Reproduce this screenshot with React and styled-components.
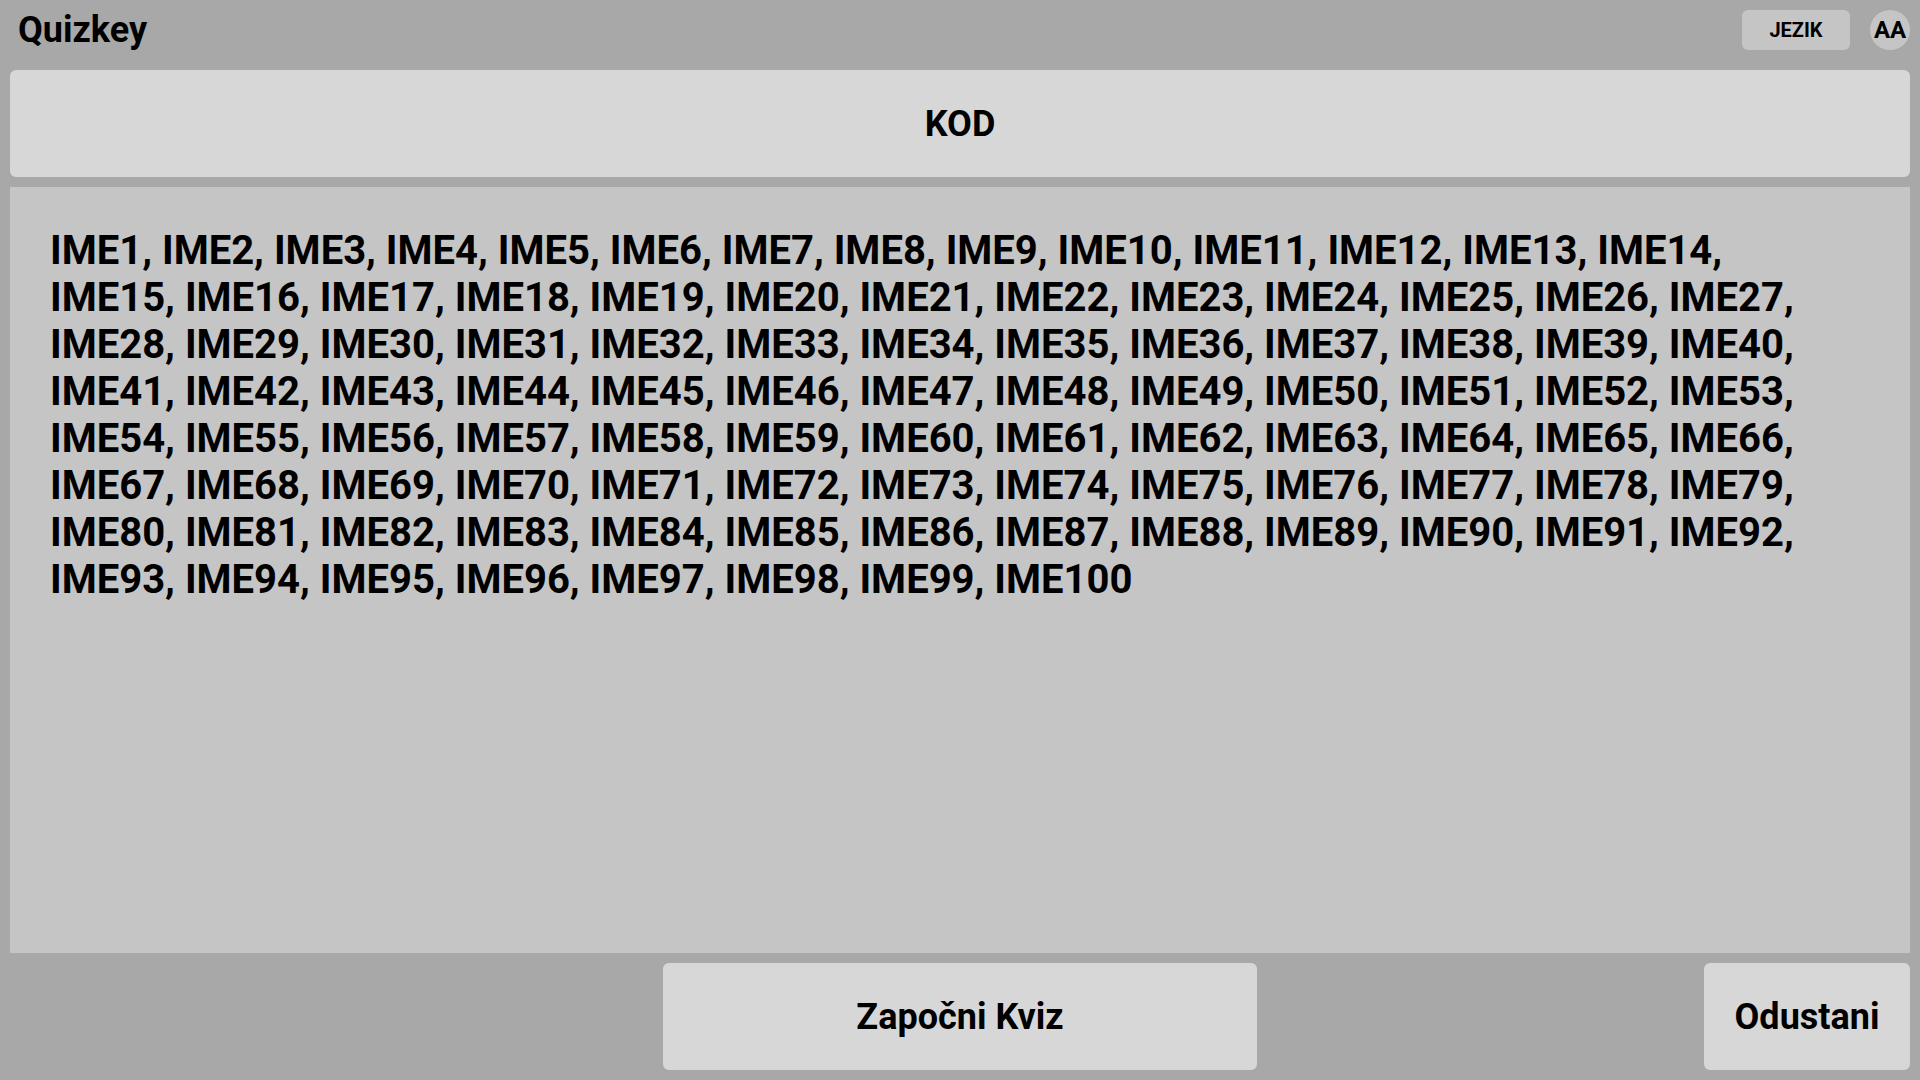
import React from "react";
import styled, { createGlobalStyle } from "styled-components";

const Global = createGlobalStyle`
  * { box-sizing: border-box; }
  body {
    margin: 0;
    background: #a8a8a8;
    color: #000;
    font-family: Roboto, sans-serif;
    font-weight: 700;
  }
`;

const Page = styled.div`
  display: flex;
  flex-direction: column;
  min-height: 100vh;
  gap: 10px;
  padding: 0 10px 10px;
`;

const Header = styled.header`
  display: flex;
  align-items: center;
  justify-content: space-between;
  height: 60px;
  padding-left: 8px;
`;

const Title = styled.h1`
  margin: 0;
  font-size: 36px;
  line-height: 42px;
`;

const Tools = styled.div`
  display: flex;
  gap: 20px;
`;

const Button = styled.button`
  border: 0;
  padding: 0;
  border-radius: 6px;
  background: #d7d7d7;
  color: inherit;
  font: inherit;
  font-size: 36px;
  line-height: 42px;
  height: 107px;
  cursor: pointer;
`;

const LanguageButton = styled(Button)`
  width: 108px;
  height: 40px;
  background: #c5c5c5;
  font-size: 20px;
  line-height: 24px;
`;

const Avatar = styled(Button)`
  width: 40px;
  height: 40px;
  border-radius: 50%;
  background: #c5c5c5;
  font-size: 24px;
  line-height: 28px;
`;

const Code = styled.div`
  display: flex;
  align-items: center;
  justify-content: center;
  height: 107px;
  border-radius: 6px;
  background: #d7d7d7;
  font-size: 36px;
  line-height: 42px;
`;

const Players = styled.main`
  flex: 1;
  padding: 40px 60px 40px 40px;
  background: #c5c5c5;
  font-size: 40px;
  line-height: 47px;
`;

const Names = styled.p`
  margin: 0;
`;

const Footer = styled.footer`
  display: grid;
  grid-template-columns: 1fr 594px 1fr;
`;

const StartButton = styled(Button)`
  grid-column: 2;
`;

const QuitButton = styled(Button)`
  justify-self: end;
  width: 206px;
`;

const names = Array.from({ length: 100 }, (_, i) => `IME${i + 1}`).join(", ");

export default function App() {
  return (
    <Page>
      <Global />
      <Header>
        <Title>Quizkey</Title>
        <Tools>
          <LanguageButton type="button">JEZIK</LanguageButton>
          <Avatar type="button">AA</Avatar>
        </Tools>
      </Header>
      <Code>KOD</Code>
      <Players>
        <Names>{names}</Names>
      </Players>
      <Footer>
        <StartButton type="button">Započni Kviz</StartButton>
        <QuitButton type="button">Odustani</QuitButton>
      </Footer>
    </Page>
  );
}
